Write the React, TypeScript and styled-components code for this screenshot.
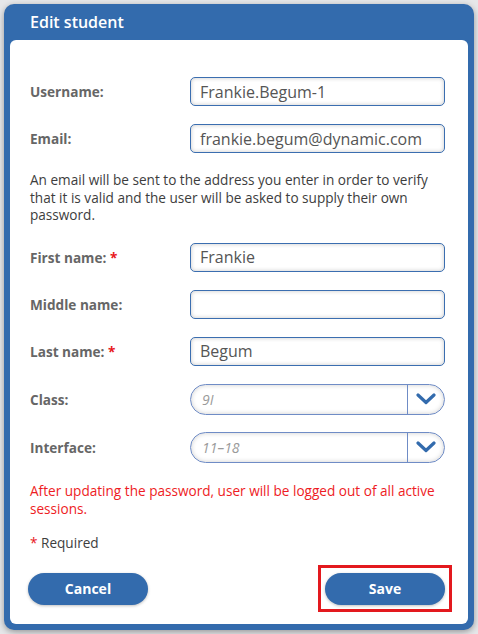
import React from "react";
import styled, { createGlobalStyle } from "styled-components";

const GlobalStyle = createGlobalStyle`
  html, body {
    margin: 0;
    padding: 0;
    background: #e6e7e9;
    font-family: "Open Sans", "Liberation Sans", sans-serif;
  }
`;

const BLUE = "#336bad";

const Page = styled.div`
  width: 478px;
  height: 634px;
  padding: 4px;
  box-sizing: border-box;
`;

const Dialog = styled.div`
  width: 470px;
  height: 626px;
  background: ${BLUE};
  border-radius: 10px;
  box-shadow: 0 2px 6px rgba(0, 0, 0, 0.35);
  display: flex;
  flex-direction: column;
  padding: 0 6px 6px;
  box-sizing: border-box;
`;

const Header = styled.div`
  height: 36px;
  display: flex;
  align-items: center;
  padding-left: 20px;
  color: #fff;
  font-size: 16px;
  font-weight: 600;
`;

const Body = styled.div`
  flex: 1;
  background: #fff;
  border-radius: 6px;
  padding: 37px 23px 19px 20px;
  display: flex;
  flex-direction: column;
`;

const Row = styled.div<{ $gap?: number }>`
  display: grid;
  grid-template-columns: 160px 255px;
  align-items: center;
  margin-bottom: ${(p) => p.$gap ?? 18}px;
`;

const Label = styled.label`
  font-size: 13.6px;
  font-weight: 700;
  color: #666;
`;

const Star = styled.span<{ $plain?: boolean }>`
  color: #e8161c;
  font-weight: ${(p) => (p.$plain ? 400 : 700)};
`;

const Input = styled.div`
  height: 29px;
  box-sizing: border-box;
  border: 1px solid #3b6eb0;
  border-radius: 5px;
  box-shadow: inset 0 0 4px rgba(0, 0, 0, 0.22);
  padding: 0 9px;
  display: flex;
  align-items: center;
  font-size: 16px;
  color: #555;
  background: #fff;
`;

const Select = styled.div`
  height: 31px;
  box-sizing: border-box;
  border: 1px solid #6f8cc6;
  border-radius: 16px;
  box-shadow: inset 0 0 5px rgba(0, 0, 0, 0.2);
  display: flex;
  align-items: stretch;
  background: #fff;
  overflow: hidden;
`;

const SelectValue = styled.div`
  flex: 1;
  display: flex;
  align-items: center;
  padding-left: 11px;
  font-size: 14px;
  font-style: italic;
  color: #9a9a9a;
`;

const SelectArrow = styled.div`
  width: 36px;
  border-left: 1px solid #6f8cc6;
  display: flex;
  align-items: center;
  justify-content: center;
`;

const Note = styled.p<{ $color?: string; $mb?: number; $lh?: number }>`
  margin: 0 0 ${(p) => p.$mb ?? 18}px;
  font-size: 13.6px;
  line-height: ${(p) => p.$lh ?? 17.5}px;
  color: ${(p) => p.$color ?? "#3d3d3d"};
`;

const Required = styled.div`
  font-size: 13.6px;
  line-height: 18px;
  color: #3d3d3d;
  margin-bottom: 21px;
`;

const Actions = styled.div`
  display: flex;
  justify-content: space-between;
  align-items: center;
  margin-left: -2px;
`;

const Button = styled.button<{ $highlight?: boolean }>`
  position: relative;
  width: 120px;
  height: 32px;
  border: none;
  border-radius: 16px;
  background: ${BLUE};
  color: #fff;
  font-family: "Open Sans", "Liberation Sans", sans-serif;
  font-size: 14px;
  font-weight: 700;
  box-shadow: 0 1px 3px rgba(0, 0, 0, 0.25);
  cursor: pointer;

  ${(p) =>
    p.$highlight &&
    `
    &::after {
      content: "";
      position: absolute;
      top: -8px;
      bottom: -7px;
      left: -7px;
      right: -7px;
      border: 3px solid #e3191e;
      pointer-events: none;
    }
  `}
`;

const Chevron = () => (
  <svg width="20" height="12" viewBox="0 0 20 12">
    <path d="M2 2 L10 9.5 L18 2" fill="none" stroke={BLUE} strokeWidth="3.2" strokeLinecap="round" strokeLinejoin="round" />
  </svg>
);

const App = () => {
  return (
    <Page>
      <GlobalStyle />
      <Dialog>
        <Header>Edit student</Header>
        <Body>
          <Row>
            <Label>Username:</Label>
            <Input>Frankie.Begum-1</Input>
          </Row>
          <Row>
            <Label>Email:</Label>
            <Input>frankie.begum@dynamic.com</Input>
          </Row>
          <Note $mb={19}>
            An email will be sent to the address you enter in order to verify
            that it is valid and the user will be asked to supply their own
            password.
          </Note>
          <Row>
            <Label>
              First name: <Star>*</Star>
            </Label>
            <Input>Frankie</Input>
          </Row>
          <Row>
            <Label>Middle name:</Label>
            <Input />
          </Row>
          <Row>
            <Label>
              Last name: <Star>*</Star>
            </Label>
            <Input>Begum</Input>
          </Row>
          <Row $gap={17}>
            <Label>Class:</Label>
            <Select>
              <SelectValue>9I</SelectValue>
              <SelectArrow>
                <Chevron />
              </SelectArrow>
            </Select>
          </Row>
          <Row $gap={19}>
            <Label>Interface:</Label>
            <Select>
              <SelectValue>11–18</SelectValue>
              <SelectArrow>
                <Chevron />
              </SelectArrow>
            </Select>
          </Row>
          <Note $color="#ee1c24" $mb={16} $lh={18}>
            After updating the password, user will be logged out of all active
            sessions.
          </Note>
          <Required>
            <Star $plain>*</Star> Required
          </Required>
          <Actions>
            <Button>Cancel</Button>
            <Button $highlight>Save</Button>
          </Actions>
        </Body>
      </Dialog>
    </Page>
  );
};

export default App;
